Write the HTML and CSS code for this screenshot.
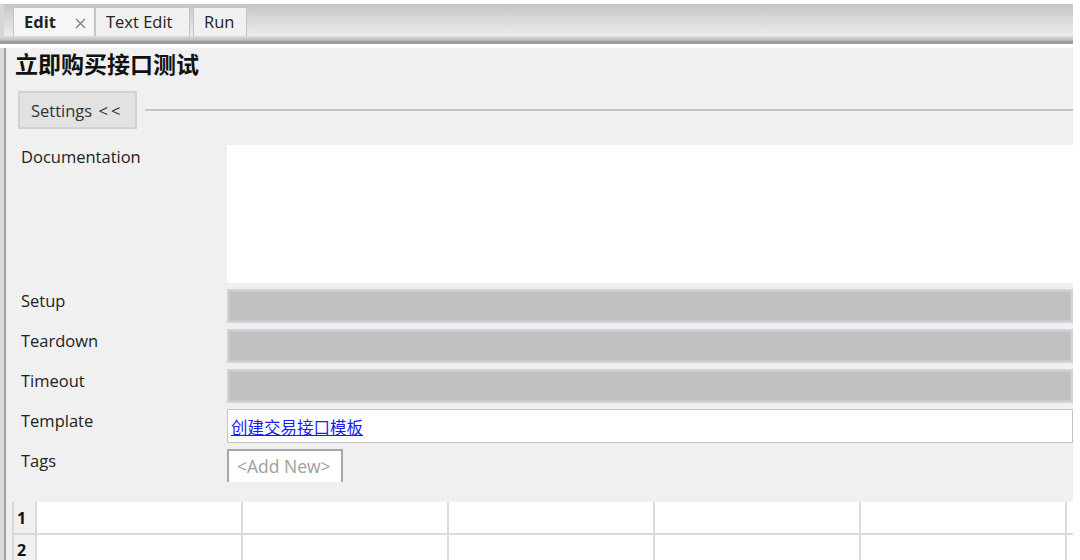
FILE: index.html
```html
<!DOCTYPE html>
<html lang="zh">
<head>
  <meta charset="UTF-8">
  <title>立即购买接口测试</title>
  <link rel="stylesheet" href="styles.css">
</head>
<body>
  <div class="window">

    <!-- タブ -->
    <div class="tabbar">
      <div class="tab active">Edit
        <svg class="close" width="11" height="11" viewBox="0 0 11 11"><path d="M1 1L10 10M10 1L1 10" stroke="#7a7a7a" stroke-width="1.2"/></svg>
      </div>
      <div class="tab text-edit">Text Edit</div>
      <div class="tab run">Run</div>
    </div>
    <div class="tab-rule"></div>

    <div class="frame">
      <div class="editor">
        <h1 class="title">立即购买接口测试</h1>

        <div class="settings-row">
          <button class="settings-btn">Settings <span class="arrows">&lt;&lt;</span></button>
          <span class="rule"></span>
        </div>

        <div class="form">
          <div class="label">Documentation</div>
          <div class="doc"></div>

          <div class="label">Setup</div>
          <div class="field disabled"></div>

          <div class="label">Teardown</div>
          <div class="field disabled"></div>

          <div class="label">Timeout</div>
          <div class="field disabled"></div>

          <div class="label">Template</div>
          <div class="field template"><a href="#">创建交易接口模板</a></div>

          <div class="label">Tags</div>
          <div class="tags"><span class="add-new">&lt;Add New&gt;</span></div>
        </div>
      </div>

      <table class="grid">
        <tr>
          <th>1</th><td></td><td></td><td></td><td></td><td></td><td class="last"></td>
        </tr>
        <tr>
          <th>2</th><td></td><td></td><td></td><td></td><td></td><td class="last"></td>
        </tr>
      </table>
    </div>
  </div>
</body>
</html>
```

FILE: styles.css
```css
* {
  box-sizing: border-box;
}

html, body {
  height: 560px;
  overflow: hidden;
}

body {
  margin: 0;
  background: #fff;
  font-family: "Open Sans", "Noto Sans", "Noto Sans CJK SC", sans-serif;
  color: #222;
}

.window {
  width: 1073px;
  margin-top: 4px;
}

.tabbar {
  height: 32px;
  display: flex;
  align-items: flex-end;
  padding-left: 9px;
  background: linear-gradient(to bottom, #c6c6c6, #ececec);
  border-left: 4px solid #d6d6d6;
}

.tab {
  height: 29px;
  padding: 0 0 0 10px;
  line-height: 27px;
  font-size: 16.5px;
  color: #222;
  background: #f0f0f0;
  border: 1px solid #c4c4c4;
  border-bottom: none;
}

.tab.active {
  width: 82px;
  font-weight: bold;
  background: #f6f6f6;
}

.tab .close {
  margin-left: 15px;
  vertical-align: -1px;
}

.tab.text-edit {
  width: 95px;
}

.tab.run {
  width: 54px;
  margin-left: 3px;
}

.tab-rule {
  height: 8px;
  background: linear-gradient(to bottom, #d8d8d8 0 2px, #c6c6c6 2px 4px, #b4b4b4 4px 5px, #9a9a9a 5px 8px);
}

.frame {
  padding-left: 6px;
  background: linear-gradient(to right, #dcdcdc 0 4px, #a0a0a0 4px 6px, #f0f0f0 6px);
}

.editor {
  background: #f0f0f0;
  padding-bottom: 20px;
}

.title {
  margin: 4px 0 0 9px;
  font-size: 23px;
  line-height: 30px;
  font-weight: bold;
  color: #111;
  font-family: "Noto Sans CJK SC", sans-serif;
}

.settings-row {
  display: flex;
  align-items: center;
  margin: 13px 0 0 12px;
}

.settings-btn {
  width: 119px;
  height: 38px;
  padding: 0 0 0 11px;
  text-align: left;
  font-family: inherit;
  font-size: 16.5px;
  color: #333;
  background: #e2e2e2;
  border: 2px solid #d2d2d2;
}

.settings-btn .arrows {
  letter-spacing: 3px;
  margin-left: 2px;
}

.rule {
  flex: 1;
  height: 2px;
  margin-left: 8px;
  background: #c4c4c4;
}

.form {
  display: grid;
  grid-template-columns: 221px 1fr;
  row-gap: 6px;
  margin-top: 16px;
}

.label {
  padding-left: 15px;
  line-height: 24px;
  font-size: 16.5px;
  color: #222;
}

.doc {
  height: 138px;
  background: #fff;
}

.field {
  height: 34px;
}

.field.disabled {
  background: #c0c0c0;
  border: 2px solid #d2d2d8;
  box-shadow: inset 0 0 0 1px #c6c6cc;
}

.field.template {
  background: #fff;
  border: 1px solid #c4c4c4;
  padding-left: 3px;
  line-height: 34px;
}

.field.template a {
  color: #1a1aff;
  font-size: 16.5px;
  font-family: "Noto Sans CJK SC", sans-serif;
}

.tags {
  height: 33px;
}

.add-new {
  display: inline-block;
  width: 116px;
  height: 33px;
  padding-left: 8px;
  line-height: 31px;
  font-size: 17.5px;
  color: #a0a0a0;
  background: #fff;
  border: 2px solid #a8a8a8;
  border-bottom: none;
}

.grid {
  margin-left: 6px;
  width: 1061px;
  border-collapse: collapse;
  table-layout: fixed;
  background: #fff;
}

.grid th {
  width: 23px;
  height: 32px;
  padding: 0 0 0 3px;
  text-align: left;
  font-size: 16px;
  font-weight: bold;
  color: #111;
  background: #f0f0f0;
  border: 2px solid #d8d8d8;
  border-top: none;
}

.grid td {
  width: 206px;
  border: 2px solid #dcdcdc;
  border-top: none;
}

.grid td.last {
  width: auto;
  border-right: none;
}
```
